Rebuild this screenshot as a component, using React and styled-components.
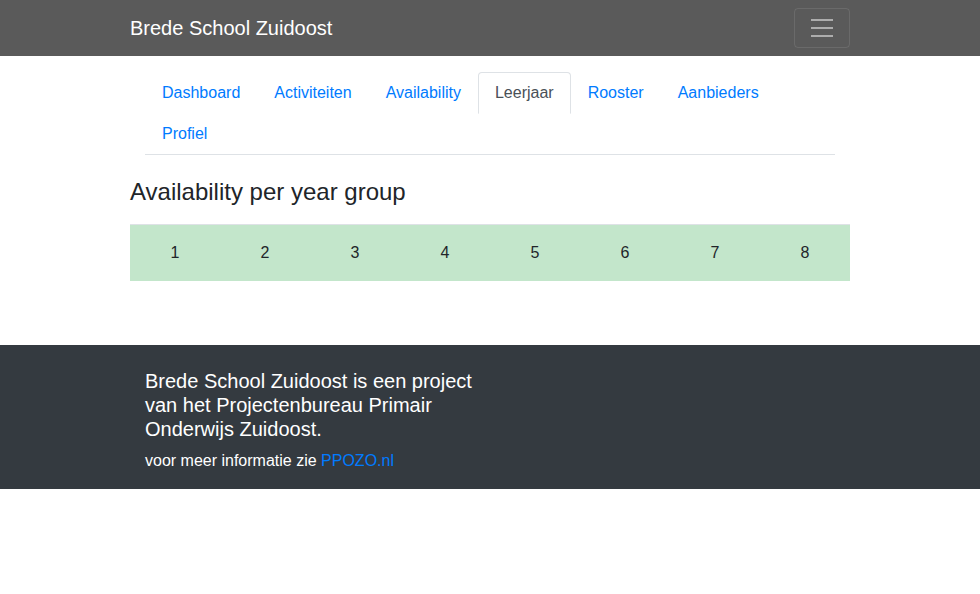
import React from 'react';
import styled, { createGlobalStyle } from 'styled-components';

const GlobalStyle = createGlobalStyle`
  body {
    margin: 0;
    font-family: 'Liberation Sans', Arial, sans-serif;
    font-size: 16px;
    line-height: 1.5;
    color: #212529;
    background: #fff;
  }
  * {
    box-sizing: border-box;
  }
`;

const Navbar = styled.nav`
  background-color: #5a5a5a;
  padding: 8px 0;
`;

const NavInner = styled.div`
  width: 720px;
  margin: 0 auto;
  display: flex;
  align-items: center;
  justify-content: space-between;
`;

const Brand = styled.a`
  font-size: 20px;
  line-height: 30px;
  padding: 5px 0;
  color: #fff;
  text-decoration: none;
`;

const Toggler = styled.button`
  width: 56px;
  height: 40px;
  padding: 4px 12px;
  background: transparent;
  border: 1px solid rgba(255, 255, 255, 0.1);
  border-radius: 4px;
  display: flex;
  align-items: center;
  justify-content: center;
`;

const Container = styled.div`
  width: 720px;
  margin: 0 auto;
`;

const Tabs = styled.ul`
  list-style: none;
  margin: 16px 15px 0;
  padding: 0;
  display: flex;
  flex-wrap: wrap;
  border-bottom: 1px solid #dee2e6;
`;

const TabItem = styled.li`
  margin-bottom: -1px;
`;

const TabLink = styled.a`
  display: block;
  padding: 8px 16px;
  line-height: 24px;
  border: 1px solid transparent;
  border-color: ${(p) => (p.$active ? '#dee2e6 #dee2e6 #fff' : 'transparent')};
  border-top-left-radius: 4px;
  border-top-right-radius: 4px;
  background: ${(p) => (p.$active ? '#fff' : 'transparent')};
  color: ${(p) => (p.$active ? '#495057' : '#007bff')};
  text-decoration: none;
`;

const Heading = styled.h4`
  margin: 23px 0 17px;
  font-size: 24px;
  font-weight: 500;
  line-height: 1.2;
`;

const YearTable = styled.div`
  display: grid;
  grid-template-columns: repeat(8, 1fr);
`;

const YearCell = styled.div`
  background-color: #c3e6cb;
  border-top: 1px solid #dee2e6;
  padding: 16px;
  line-height: 24px;
  text-align: center;
`;

const Footer = styled.footer`
  margin-top: 64px;
  background-color: #343a40;
  color: #fff;
  padding: 24px 0 16px;
`;

const FooterCol = styled.div`
  width: 360px;
  padding: 0 15px;
`;

const FooterTitle = styled.h5`
  margin: 0 0 8px;
  font-size: 20px;
  font-weight: 500;
  line-height: 1.2;
`;

const FooterText = styled.p`
  margin: 0;
`;

const FooterLink = styled.a`
  color: #007bff;
  text-decoration: none;
`;

const tabs = ['Dashboard', 'Activiteiten', 'Availability', 'Leerjaar', 'Rooster', 'Aanbieders', 'Profiel'];
const years = [1, 2, 3, 4, 5, 6, 7, 8];

function MenuIcon() {
  return (
    <svg width="30" height="30" viewBox="0 0 30 30">
      <path
        d="M4 7h22M4 15h22M4 23h22"
        stroke="rgba(255,255,255,0.5)"
        strokeWidth="2"
        strokeLinecap="butt"
      />
    </svg>
  );
}

export default function App() {
  return (
    <>
      <GlobalStyle />
      <Navbar>
        <NavInner>
          <Brand href="#">Brede School Zuidoost</Brand>
          <Toggler aria-label="Toggle navigation">
            <MenuIcon />
          </Toggler>
        </NavInner>
      </Navbar>
      <Container>
        <Tabs>
          {tabs.map((t) => (
            <TabItem key={t}>
              <TabLink href="#" $active={t === 'Leerjaar'}>
                {t}
              </TabLink>
            </TabItem>
          ))}
        </Tabs>
        <Heading>Availability per year group</Heading>
        <YearTable>
          {years.map((y) => (
            <YearCell key={y}>{y}</YearCell>
          ))}
        </YearTable>
      </Container>
      <Footer>
        <Container>
          <FooterCol>
            <FooterTitle>
              Brede School Zuidoost is een project van het Projectenbureau Primair Onderwijs Zuidoost.
            </FooterTitle>
            <FooterText>
              voor meer informatie zie <FooterLink href="#">PPOZO.nl</FooterLink>
            </FooterText>
          </FooterCol>
        </Container>
      </Footer>
    </>
  );
}
